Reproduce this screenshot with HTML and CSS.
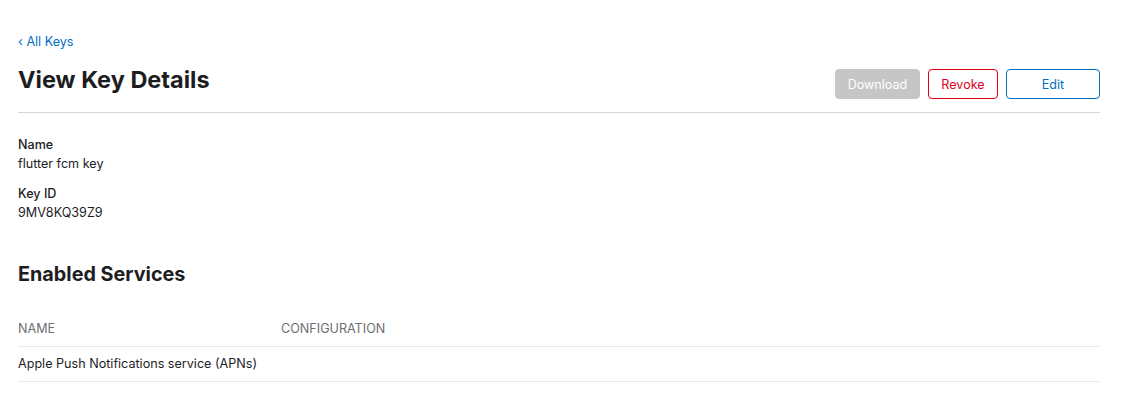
FILE: index.html
```html
<!DOCTYPE html>
<html>
<head>
<meta charset="utf-8">
<link rel="stylesheet" href="styles.css">
</head>
<body>
<main class="page">
  <a class="back" href="#">‹ All Keys</a>
  <header class="head">
    <h1 class="title">View Key Details</h1>
    <div class="actions">
      <button class="btn btn-disabled" disabled>Download</button>
      <button class="btn btn-danger">Revoke</button>
      <button class="btn btn-primary">Edit</button>
    </div>
  </header>
  <dl class="details">
    <dt>Name</dt>
    <dd>flutter fcm key</dd>
    <dt>Key ID</dt>
    <dd>9MV8KQ39Z9</dd>
  </dl>
  <h2 class="section">Enabled Services</h2>
  <div class="table">
    <div class="row row-head">
      <div class="col-name">NAME</div>
      <div class="col-config">CONFIGURATION</div>
    </div>
    <div class="row">
      <div class="col-name">Apple Push Notifications service (APNs)</div>
      <div class="col-config"></div>
    </div>
  </div>
</main>
</body>
</html>
```
FILE: styles.css
```css
* { box-sizing: border-box; }
html, body { margin: 0; padding: 0; background: #fff; }
body {
  font-family: Inter, "Noto Sans", "Liberation Sans", sans-serif;
  color: #1d1d1f;
  -webkit-font-smoothing: antialiased;
}
.page {
  padding: 33px 26px 0 18px;
  display: flex;
  flex-direction: column;
}
.back {
  color: #0070c9;
  text-decoration: none;
  font-size: 12.6px;
  line-height: 18px;
  align-self: flex-start;
}
.head {
  display: flex;
  justify-content: space-between;
  align-items: flex-start;
  padding: 18px 0 13px;
  border-bottom: 1px solid #d6d6d6;
}
.title {
  margin: 0;
  font-size: 23.5px;
  font-weight: 700;
  line-height: 22px;
  color: #1d1d1f;
}
.actions {
  display: flex;
  gap: 8px;
}
.btn {
  font-family: inherit;
  font-size: 12.6px;
  height: 30px;
  border-radius: 4px;
  background: #fff;
  padding: 0;
  cursor: pointer;
}
.btn-disabled {
  width: 85px;
  background: #c6c6c6;
  border: 1px solid #c6c6c6;
  color: #fff;
}
.btn-danger {
  width: 70px;
  border: 1px solid #e0001b;
  color: #e0001b;
}
.btn-primary {
  width: 94px;
  border: 1px solid #0070c9;
  color: #0070c9;
}
.details {
  margin: 22px 0 0;
  font-size: 12.6px;
}
.details dt {
  font-weight: 500;
  line-height: 19px;
  color: #1d1d1f;
}
.details dd {
  margin: 0 0 11px;
  line-height: 19px;
  color: #1d1d1f;
}
.section {
  margin: 29px 0 0;
  font-size: 19.8px;
  font-weight: 700;
  line-height: 24px;
}
.table {
  margin-top: 26px;
  font-size: 12.6px;
}
.row {
  display: grid;
  grid-template-columns: 263px 1fr;
  border-bottom: 1px solid #e8e8e8;
  line-height: 34px;
}
.row-head {
  color: #6e6e73;
}
```
